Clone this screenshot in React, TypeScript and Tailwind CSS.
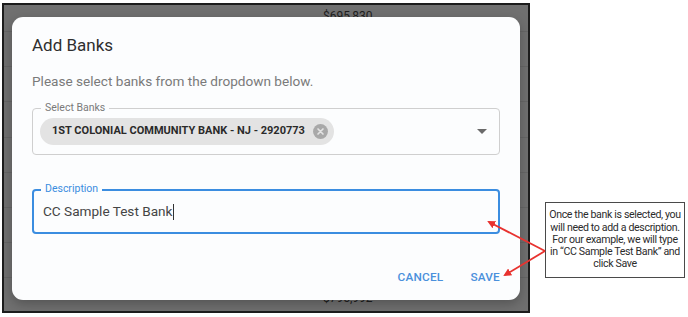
import React from "react";

const rows = [
  { h: "h-[27px]", text: "$695,830", align: "items-end pb-[6px]" },
  { h: "h-[35px]", text: "", align: "" },
  { h: "h-[35px]", text: "", align: "" },
  { h: "h-[36px]", text: "", align: "" },
  { h: "h-[35px]", text: "", align: "" },
  { h: "h-[35px]", text: "", align: "" },
  { h: "h-[35px]", text: "", align: "" },
  { h: "h-[35px]", text: "", align: "" },
];

export default function App() {
  return (
    <div
      className="relative w-[688px] h-[317px] bg-white flex items-start"
      style={{ fontFamily: "Roboto, 'Liberation Sans', sans-serif" }}
    >
      {/* Screenshot frame */}
      <div className="relative ml-[2px] mt-[3px] w-[528px] h-[310px] border-2 border-[#1c1c1c] bg-[#707070] overflow-hidden">
        {/* backdrop table */}
        <div className="flex flex-col">
          {rows.map((r, i) => (
            <div
              key={i}
              className={`${r.h} border-b border-[#666666] flex ${r.align} pl-[319px] text-[12px] text-[#1e1e1e]`}
            >
              {r.text}
            </div>
          ))}
          <div className="h-[33px] flex items-end pb-[4px] pl-[319px] text-[12px] text-[#1e1e1e]">
            $795,992
          </div>
        </div>

        {/* Dialog */}
        <div className="absolute left-[8px] top-[12px] w-[508px] h-[283px] rounded-[11px] bg-[#fcfdfe] px-[20px] pt-[16px] flex flex-col shadow-[0_4px_12px_rgba(0,0,0,0.25)]">
          <div className="h-[24px] leading-[24px] text-[17px] text-[#2e2e2e]">Add Banks</div>
          <div className="mt-[14px] h-[20px] leading-[20px] text-[13.6px] text-[#7a7a7a]">
            Please select banks from the dropdown below.
          </div>

          {/* Select banks */}
          <div className="relative mt-[17px] h-[47px] rounded-[4px] border border-[#cfcfcf] flex items-center pl-[7px] pr-[12px]">
            <div className="absolute left-[8px] top-[-8px] px-[4px] bg-[#fcfdfe] text-[10.5px] leading-[14px] text-[#7a7a7a]">
              Select Banks
            </div>
            <div className="h-[27px] rounded-full bg-[#e3e3e3] flex items-center pl-[12px] pr-[5px] gap-[7px]">
              <span className="text-[11px] font-bold text-[#2a2a2a]">
                1ST COLONIAL COMMUNITY BANK - NJ - 2920773
              </span>
              <svg width="17" height="17" viewBox="0 0 24 24">
                <circle cx="12" cy="12" r="10.5" fill="#a8a8a8" />
                <path d="M8.5 8.5 L15.5 15.5 M15.5 8.5 L8.5 15.5" stroke="#e3e3e3" strokeWidth="2.4" strokeLinecap="round" />
              </svg>
            </div>
            <div className="ml-auto">
              <svg width="10" height="5" viewBox="0 0 10 5">
                <path d="M0 0 L10 0 L5 5 Z" fill="#6a6a6a" />
              </svg>
            </div>
          </div>

          {/* Description */}
          <div className="relative mt-[34px] h-[45px] rounded-[4px] border-2 border-[#3b8de0] flex items-center pl-[9px]">
            <div className="absolute left-[7px] top-[-9px] px-[4px] bg-[#fcfdfe] text-[10.5px] leading-[14px] text-[#3b8de0]">
              Description
            </div>
            <span className="text-[13.6px] text-[#454545]">CC Sample Test Bank</span>
            <span className="ml-[1px] w-[1px] h-[16px] bg-[#333]" />
          </div>

          {/* Actions */}
          <div className="mt-[33px] pr-[0px] flex justify-end items-center gap-[27px] text-[11.8px] font-medium tracking-[0.2px] text-[#4a90dc] leading-[20px]">
            <span>CANCEL</span>
            <span>SAVE</span>
          </div>
        </div>
      </div>

      {/* Annotation */}
      <div
        className="ml-[15px] mt-[202px] w-[140px] h-[76px] border border-[#4a4a4a] bg-white flex items-center justify-center text-center text-[10.6px] leading-[12.3px] text-[#2c2c2c] tracking-[-0.35px]"
        style={{ fontFamily: "Roboto, 'Noto Sans', sans-serif" }}
      >
        <div>
          Once the bank is selected, you
          <br />
          will need to add a description.
          <br />
          For our example, we will type
          <br />
          in “CC Sample Test Bank” and
          <br />
          click Save
        </div>
      </div>

      {/* Arrows */}
      <svg className="absolute left-0 top-0 pointer-events-none" width="688" height="317">
        <defs>
          <marker id="ah" markerWidth="8" markerHeight="8" refX="6" refY="4" orient="auto" markerUnits="userSpaceOnUse">
            <path d="M0 0 L8 4 L0 8 Z" fill="#e8322f" />
          </marker>
        </defs>
        <line x1="545" y1="251" x2="489" y2="222" stroke="#e8322f" strokeWidth="1.8" markerEnd="url(#ah)" />
        <line x1="545" y1="251" x2="505" y2="275" stroke="#e8322f" strokeWidth="1.8" markerEnd="url(#ah)" />
      </svg>
    </div>
  );
}
